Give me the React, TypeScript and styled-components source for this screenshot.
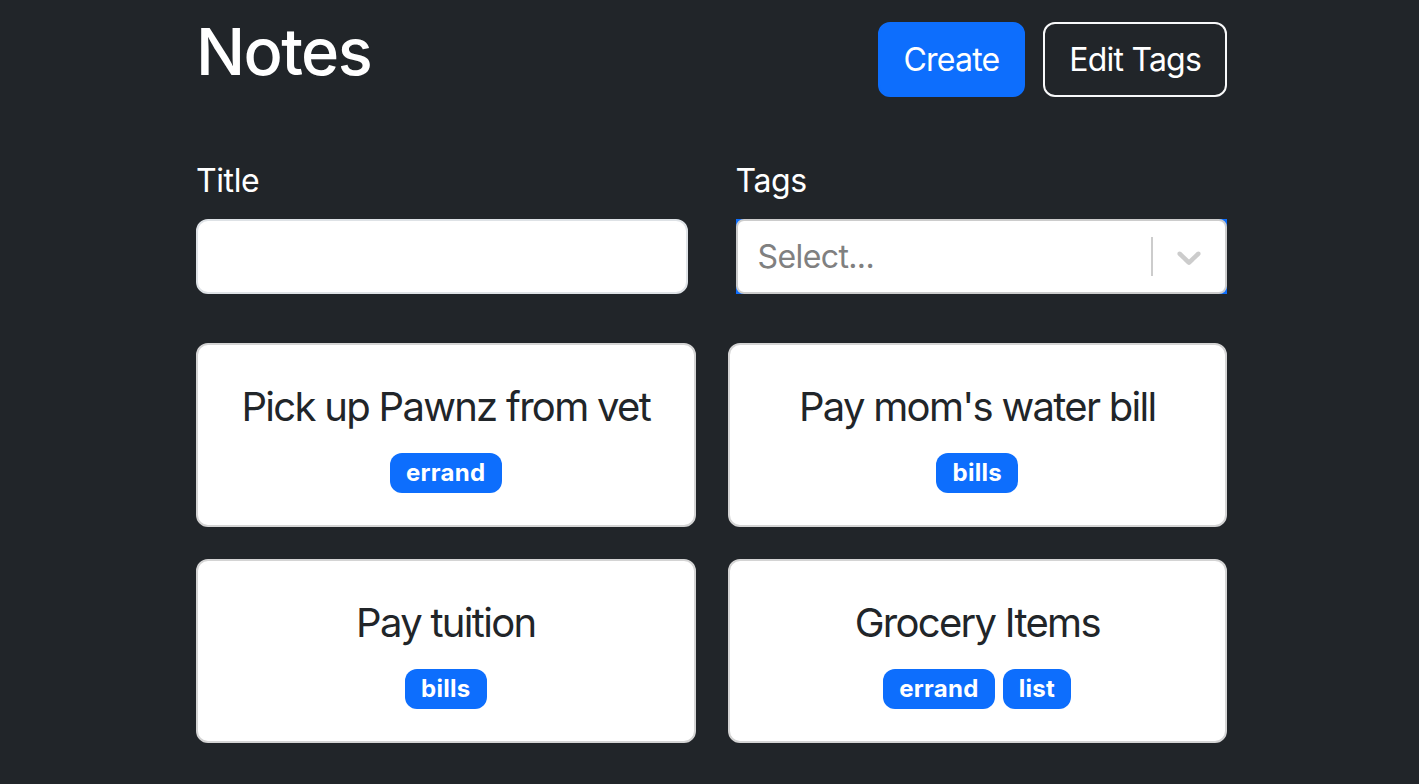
import React from "react";
import styled, { createGlobalStyle } from "styled-components";

const GlobalStyle = createGlobalStyle`
  html, body {
    margin: 0;
    padding: 0;
    background: #212529;
  }
  body {
    font-family: Inter, "Noto Sans", "Liberation Sans", sans-serif;
    color: #fff;
    -webkit-font-smoothing: antialiased;
  }
  * { box-sizing: border-box; }
`;

const Page = styled.div`
  padding-left: 4px;
`;

const Container = styled.div`
  width: 1031px;
  margin: 0 auto;
  padding-top: 13px;
`;

const Header = styled.header`
  display: flex;
  align-items: center;
  justify-content: space-between;
  margin-bottom: 51px;
`;

const PageTitle = styled.h1`
  margin: 0 0 15px;
  font-size: 65px;
  font-weight: 500;
  line-height: 78px;
  letter-spacing: -1.6px;
  color: #fff;
`;

const ButtonGroup = styled.div`
  display: flex;
  gap: 18px;
`;

const Button = styled.button<{ $variant: "primary" | "outline" }>`
  height: 75px;
  padding: 0 24px;
  font-family: inherit;
  font-size: 32px;
  font-weight: 400;
  line-height: 1.5;
  letter-spacing: -0.8px;
  border-radius: 12px;
  border: 2px solid ${(p) => (p.$variant === "primary" ? "#0d6efd" : "#f8f9fa")};
  background: ${(p) => (p.$variant === "primary" ? "#0d6efd" : "transparent")};
  color: #fff;
  cursor: pointer;
`;

const FilterRow = styled.div`
  display: grid;
  grid-template-columns: 1fr 1fr;
  column-gap: 48px;
  margin-bottom: 49px;
`;

const Field = styled.div`
  display: flex;
  flex-direction: column;
`;

const Label = styled.label`
  display: block;
  font-size: 32px;
  line-height: 48px;
  letter-spacing: -0.4px;
  margin-bottom: 14px;
  color: #fff;
`;

const TextInput = styled.input`
  height: 75px;
  width: 100%;
  padding: 0 24px;
  font-family: inherit;
  font-size: 32px;
  border: 2px solid #dee2e6;
  border-radius: 12px;
  background: #fff;
  outline: none;
`;

const SelectFrame = styled.div`
  background: #0d6efd;
  height: 75px;
`;

const SelectControl = styled.div`
  height: 100%;
  display: flex;
  align-items: center;
  background: #fff;
  border: 2px solid #cccccc;
  border-radius: 8px;
`;

const Placeholder = styled.div`
  flex: 1;
  padding-left: 20px;
  font-size: 32px;
  letter-spacing: -0.6px;
  color: #808080;
`;

const Separator = styled.span`
  align-self: stretch;
  width: 2px;
  margin: 16px 0;
  background: #cccccc;
`;

const Indicator = styled.div`
  display: flex;
  padding: 16px;
  color: #cccccc;
`;

const CardGrid = styled.div`
  display: grid;
  grid-template-columns: 1fr 1fr;
  gap: 32px;
`;

const Card = styled.div`
  height: 184px;
  padding-top: 6px;
  background: #fff;
  border: 2px solid #d4d4d4;
  border-radius: 12px;
  display: flex;
  flex-direction: column;
  align-items: center;
  justify-content: center;
  gap: 22px;
`;

const CardTitle = styled.div`
  font-size: 40px;
  line-height: 48px;
  font-weight: 400;
  letter-spacing: -1.7px;
  color: #212529;
`;

const BadgeRow = styled.div`
  display: flex;
  gap: 8px;
`;

const Badge = styled.span`
  display: inline-block;
  height: 40px;
  padding: 0 16px;
  font-size: 24px;
  line-height: 40px;
  font-weight: 700;
  letter-spacing: 0.3px;
  color: #fff;
  background: #0d6efd;
  border-radius: 12px;
`;

const notes = [
  { title: "Pick up Pawnz from vet", tags: ["errand"] },
  { title: "Pay mom's water bill", tags: ["bills"] },
  { title: "Pay tuition", tags: ["bills"] },
  { title: "Grocery Items", tags: ["errand", "list"] },
];

const Chevron = () => (
  <svg width="40" height="40" viewBox="0 0 20 20" fill="currentColor" aria-hidden="true">
    <path d="M4.516 7.548c0.436-0.446 1.043-0.481 1.576 0l3.908 3.747 3.908-3.747c0.533-0.481 1.141-0.446 1.574 0 0.436 0.445 0.408 1.197 0 1.615-0.406 0.418-4.695 4.502-4.695 4.502-0.217 0.223-0.502 0.335-0.787 0.335s-0.57-0.112-0.789-0.335c0 0-4.287-4.084-4.695-4.502s-0.436-1.17 0-1.615z" />
  </svg>
);

export default function App() {
  return (
    <>
      <GlobalStyle />
      <Page>
        <Container>
          <Header>
            <PageTitle>Notes</PageTitle>
            <ButtonGroup>
              <Button $variant="primary">Create</Button>
              <Button $variant="outline">Edit Tags</Button>
            </ButtonGroup>
          </Header>
          <FilterRow>
            <Field>
              <Label>Title</Label>
              <TextInput type="text" />
            </Field>
            <Field>
              <Label>Tags</Label>
              <SelectFrame>
                <SelectControl>
                  <Placeholder>Select...</Placeholder>
                  <Separator />
                  <Indicator>
                    <Chevron />
                  </Indicator>
                </SelectControl>
              </SelectFrame>
            </Field>
          </FilterRow>
          <CardGrid>
            {notes.map((n) => (
              <Card key={n.title}>
                <CardTitle>{n.title}</CardTitle>
                <BadgeRow>
                  {n.tags.map((t) => (
                    <Badge key={t}>{t}</Badge>
                  ))}
                </BadgeRow>
              </Card>
            ))}
          </CardGrid>
        </Container>
      </Page>
    </>
  );
}
